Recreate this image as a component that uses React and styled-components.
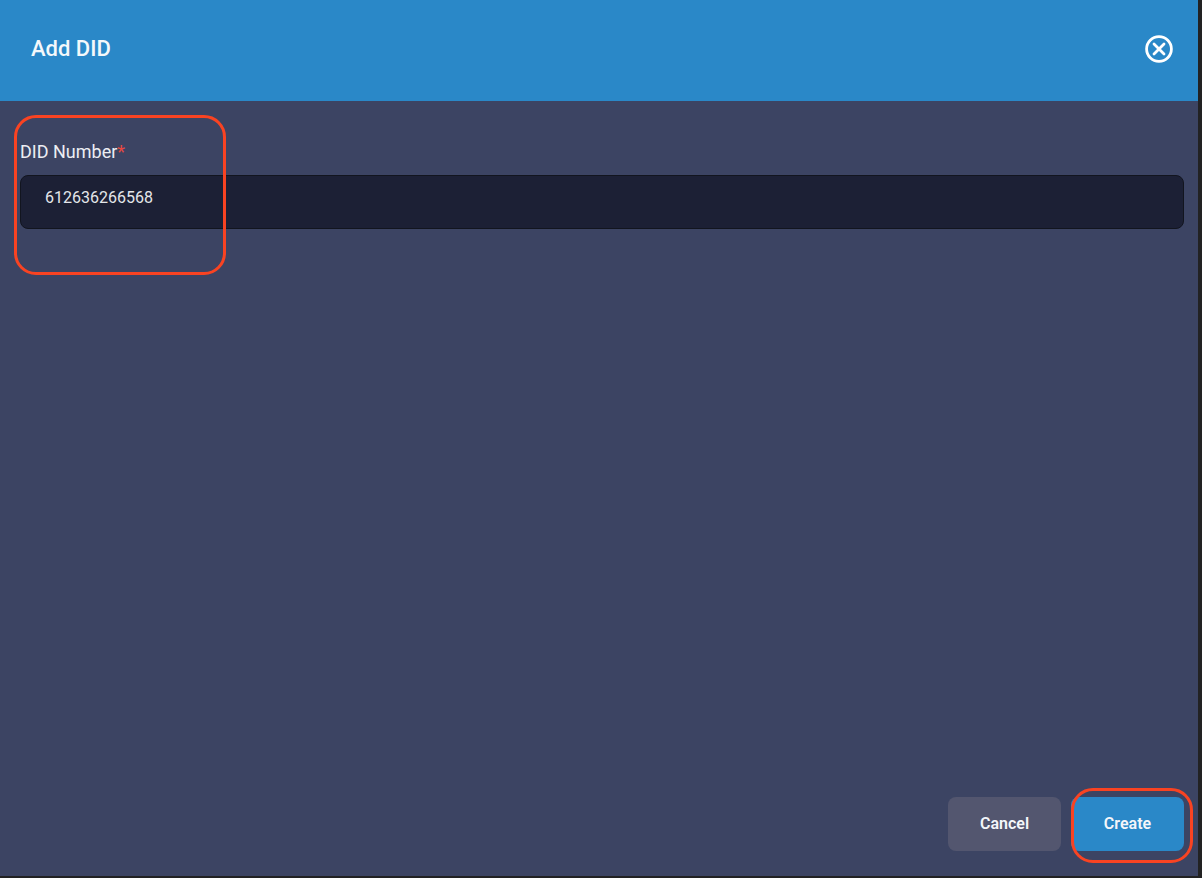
import React, { useState } from "react";
import styled, { createGlobalStyle } from "styled-components";

const GlobalStyle = createGlobalStyle`
  * {
    box-sizing: border-box;
  }
  body {
    margin: 0;
    background-color: #222223;
    font-family: Roboto, "Liberation Sans", sans-serif;
  }
`;
const Container = styled.div`
  min-height: 100vh;
  padding: 0 4px 2px 0;
  display: flex;
`;
const Modal = styled.form`
  flex: 1;
  display: flex;
  flex-direction: column;
  background-color: #3c4463;
`;
const Header = styled.header`
  display: flex;
  align-items: center;
  justify-content: space-between;
  padding: 33px 23px 36px 31px;
  background-color: #2a88c8;
`;
const Title = styled.h1`
  margin: 0;
  font-size: 22px;
  font-weight: 500;
  line-height: 32px;
  color: #f4f8fb;
`;
const CloseButton = styled.button`
  display: flex;
  padding: 2px;
  border: none;
  background: none;
  color: #ffffff;
  cursor: pointer;
`;
const Body = styled.main`
  flex: 1;
  padding: 42px 14px 42px 20px;
`;
const Field = styled.div`
  position: relative;
  display: flex;
  flex-direction: column;
  gap: 14px;
`;
const Label = styled.label`
  font-size: 18px;
  line-height: 18px;
  color: #eceef3;
`;
const Required = styled.span`
  color: #e8483f;
`;
const Input = styled.input`
  width: 100%;
  height: 54px;
  padding: 0 24px 10px;
  border: 1px solid #12151f;
  border-radius: 8px;
  background-color: #1c2035;
  font-family: inherit;
  font-size: 16px;
  color: #e4e6ea;
  outline: none;
`;
const Footer = styled.footer`
  display: flex;
  justify-content: flex-end;
  gap: 10px;
  padding: 0 14px 25px;
`;
const ButtonWrapper = styled.div`
  position: relative;
`;
const Button = styled.button`
  min-width: 113px;
  height: 54px;
  padding: 0 24px 2px;
  border: none;
  border-radius: 8px;
  background-color: ${(props) => (props.$primary ? "#2a88c8" : "#53566f")};
  font-family: inherit;
  font-size: 16px;
  font-weight: 600;
  color: #f4f6fa;
  cursor: pointer;
`;
const Highlight = styled.div`
  position: absolute;
  border: 3px solid #f94322;
  border-radius: 22px;
  pointer-events: none;
`;
const FieldHighlight = styled(Highlight)`
  top: -28px;
  left: -6px;
  width: 212px;
  height: 160px;
`;
const ButtonHighlight = styled(Highlight)`
  top: -9px;
  right: -9px;
  bottom: -12px;
  left: 0;
`;

const App = () => {
  const [number, setNumber] = useState("612636266568");

  return (
    <Container>
      <GlobalStyle />
      <Modal onSubmit={(e) => e.preventDefault()}>
        <Header>
          <Title>Add DID</Title>
          <CloseButton type="button" aria-label="Close">
            <svg
              width="28"
              height="28"
              viewBox="0 0 28 28"
              fill="none"
              stroke="currentColor"
            >
              <circle cx="14" cy="14" r="12.4" strokeWidth="2.8" />
              <path
                d="M9 9l10 10M19 9L9 19"
                strokeWidth="2.8"
                strokeLinecap="round"
              />
            </svg>
          </CloseButton>
        </Header>
        <Body>
          <Field>
            <Label htmlFor="did">
              DID Number<Required>*</Required>
            </Label>
            <Input
              id="did"
              name="did"
              value={number}
              onChange={(e) => setNumber(e.target.value)}
            />
            <FieldHighlight />
          </Field>
        </Body>
        <Footer>
          <Button type="button">Cancel</Button>
          <ButtonWrapper>
            <Button type="submit" $primary>
              Create
            </Button>
            <ButtonHighlight />
          </ButtonWrapper>
        </Footer>
      </Modal>
    </Container>
  );
};

export default App;
